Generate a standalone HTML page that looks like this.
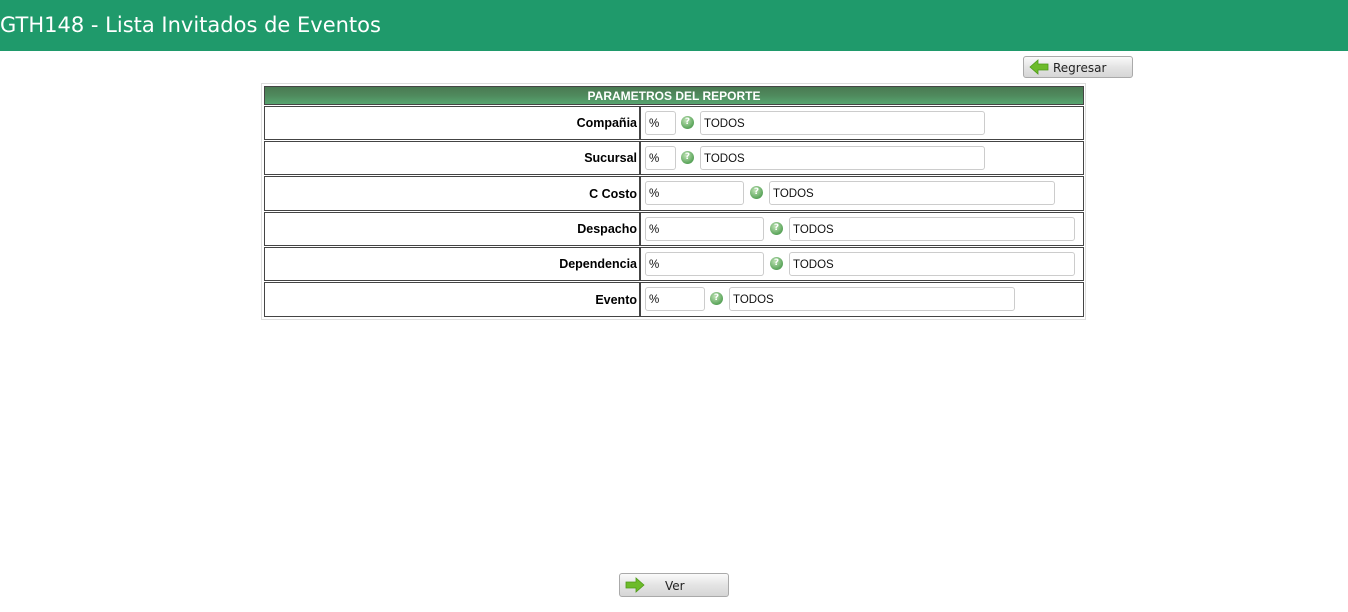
<!DOCTYPE html>
<html><head><meta charset="utf-8"><style>
body{margin:0;width:1348px;height:612px;background:#fff;font-family:"DejaVu Sans","Liberation Sans",sans-serif;position:relative;overflow:hidden}
.hdr{position:absolute;left:0;top:0;width:1348px;height:51px;background:#1f9a6b;color:#fff;font-size:21px;line-height:51px;padding-left:0;box-sizing:border-box}
.btn{position:absolute;height:22px;border:1px solid #aaa;border-radius:3px;background:linear-gradient(#fafafa,#e4e4e4 50%,#d6d6d6);box-sizing:border-box;font-size:12px;color:#222}
.outer{position:absolute;left:261px;top:83px;width:825px;height:237px;border:1px solid #ddd;box-sizing:border-box}
.th{position:absolute;left:264px;top:86px;width:820px;height:19px;border:1px solid #444;box-sizing:border-box;background:linear-gradient(#4a7a52,#4f8a5d 50%,#57a570);color:#fff;font-weight:bold;font-size:12px;text-align:center;line-height:19px;font-family:"Liberation Sans",sans-serif}
.lab{position:absolute;left:264px;width:376px;height:34px;border:1px solid #444;box-sizing:border-box;text-align:right;font-weight:bold;font-size:12.5px;line-height:33px;padding-right:2px;font-family:"Liberation Sans",sans-serif}
.val{position:absolute;left:640px;width:444px;height:34px;border:1px solid #444;box-sizing:border-box}
.in{position:absolute;height:24px;border:1px solid #ccc;border-radius:3px;box-sizing:border-box;font-size:11.5px;line-height:25px;padding-left:3px;color:#111;font-family:"Liberation Sans",sans-serif}
.ic{position:absolute;width:13px;height:13px;border-radius:50%;background:radial-gradient(circle at 40% 35%,#bfe3b5,#5aa45a 70%,#3d8a43);color:#fff;font-size:9px;font-weight:bold;text-align:center;line-height:13px}
</style></head><body>
<div class="hdr">GTH148 - Lista Invitados de Eventos</div>
<div class="btn" style="left:1023px;top:56px;width:110px">
<svg style="position:absolute;left:5px;top:2px" width="20" height="16" viewBox="0 0 20 16"><path d="M1 8 L9 1 V5 H19 V11 H9 V15 Z" fill="#6dbb2a" stroke="#4d9a18" stroke-width=".8"/></svg>
<span style="position:absolute;left:29px;top:4px">Regresar</span></div>
<div class="outer"></div>
<div class="th">PARAMETROS DEL REPORTE</div>

<div class="lab" style="top:106px">Compañia</div><div class="val" style="top:106px"></div>
<div class="in" style="left:645px;top:111px;width:31px">%</div><div class="ic" style="left:681px;top:116px">?</div><div class="in" style="left:700px;top:111px;width:285px">TODOS</div>

<div class="lab" style="top:141px">Sucursal</div><div class="val" style="top:141px"></div>
<div class="in" style="left:645px;top:146px;width:31px">%</div><div class="ic" style="left:681px;top:151px">?</div><div class="in" style="left:700px;top:146px;width:285px">TODOS</div>

<div class="lab" style="top:176px;height:35px;line-height:34px">C Costo</div><div class="val" style="top:176px;height:35px"></div>
<div class="in" style="left:645px;top:181px;width:99px">%</div><div class="ic" style="left:750px;top:186px">?</div><div class="in" style="left:769px;top:181px;width:286px">TODOS</div>

<div class="lab" style="top:212px">Despacho</div><div class="val" style="top:212px"></div>
<div class="in" style="left:645px;top:217px;width:119px">%</div><div class="ic" style="left:770px;top:222px">?</div><div class="in" style="left:789px;top:217px;width:286px">TODOS</div>

<div class="lab" style="top:247px">Dependencia</div><div class="val" style="top:247px"></div>
<div class="in" style="left:645px;top:252px;width:119px">%</div><div class="ic" style="left:770px;top:257px">?</div><div class="in" style="left:789px;top:252px;width:286px">TODOS</div>

<div class="lab" style="top:282px;height:35px;line-height:34px">Evento</div><div class="val" style="top:282px;height:35px"></div>
<div class="in" style="left:645px;top:287px;width:60px">%</div><div class="ic" style="left:710px;top:292px">?</div><div class="in" style="left:729px;top:287px;width:286px">TODOS</div>

<div class="btn" style="left:619px;top:573px;width:110px;height:24px">
<svg style="position:absolute;left:5px;top:3px" width="20" height="16" viewBox="0 0 20 16"><path d="M19 8 L11 1 V5 H1 V11 H11 V15 Z" fill="#6dbb2a" stroke="#4d9a18" stroke-width=".8"/></svg>
<span style="position:absolute;left:45px;top:5px">Ver</span></div>
</body></html>
